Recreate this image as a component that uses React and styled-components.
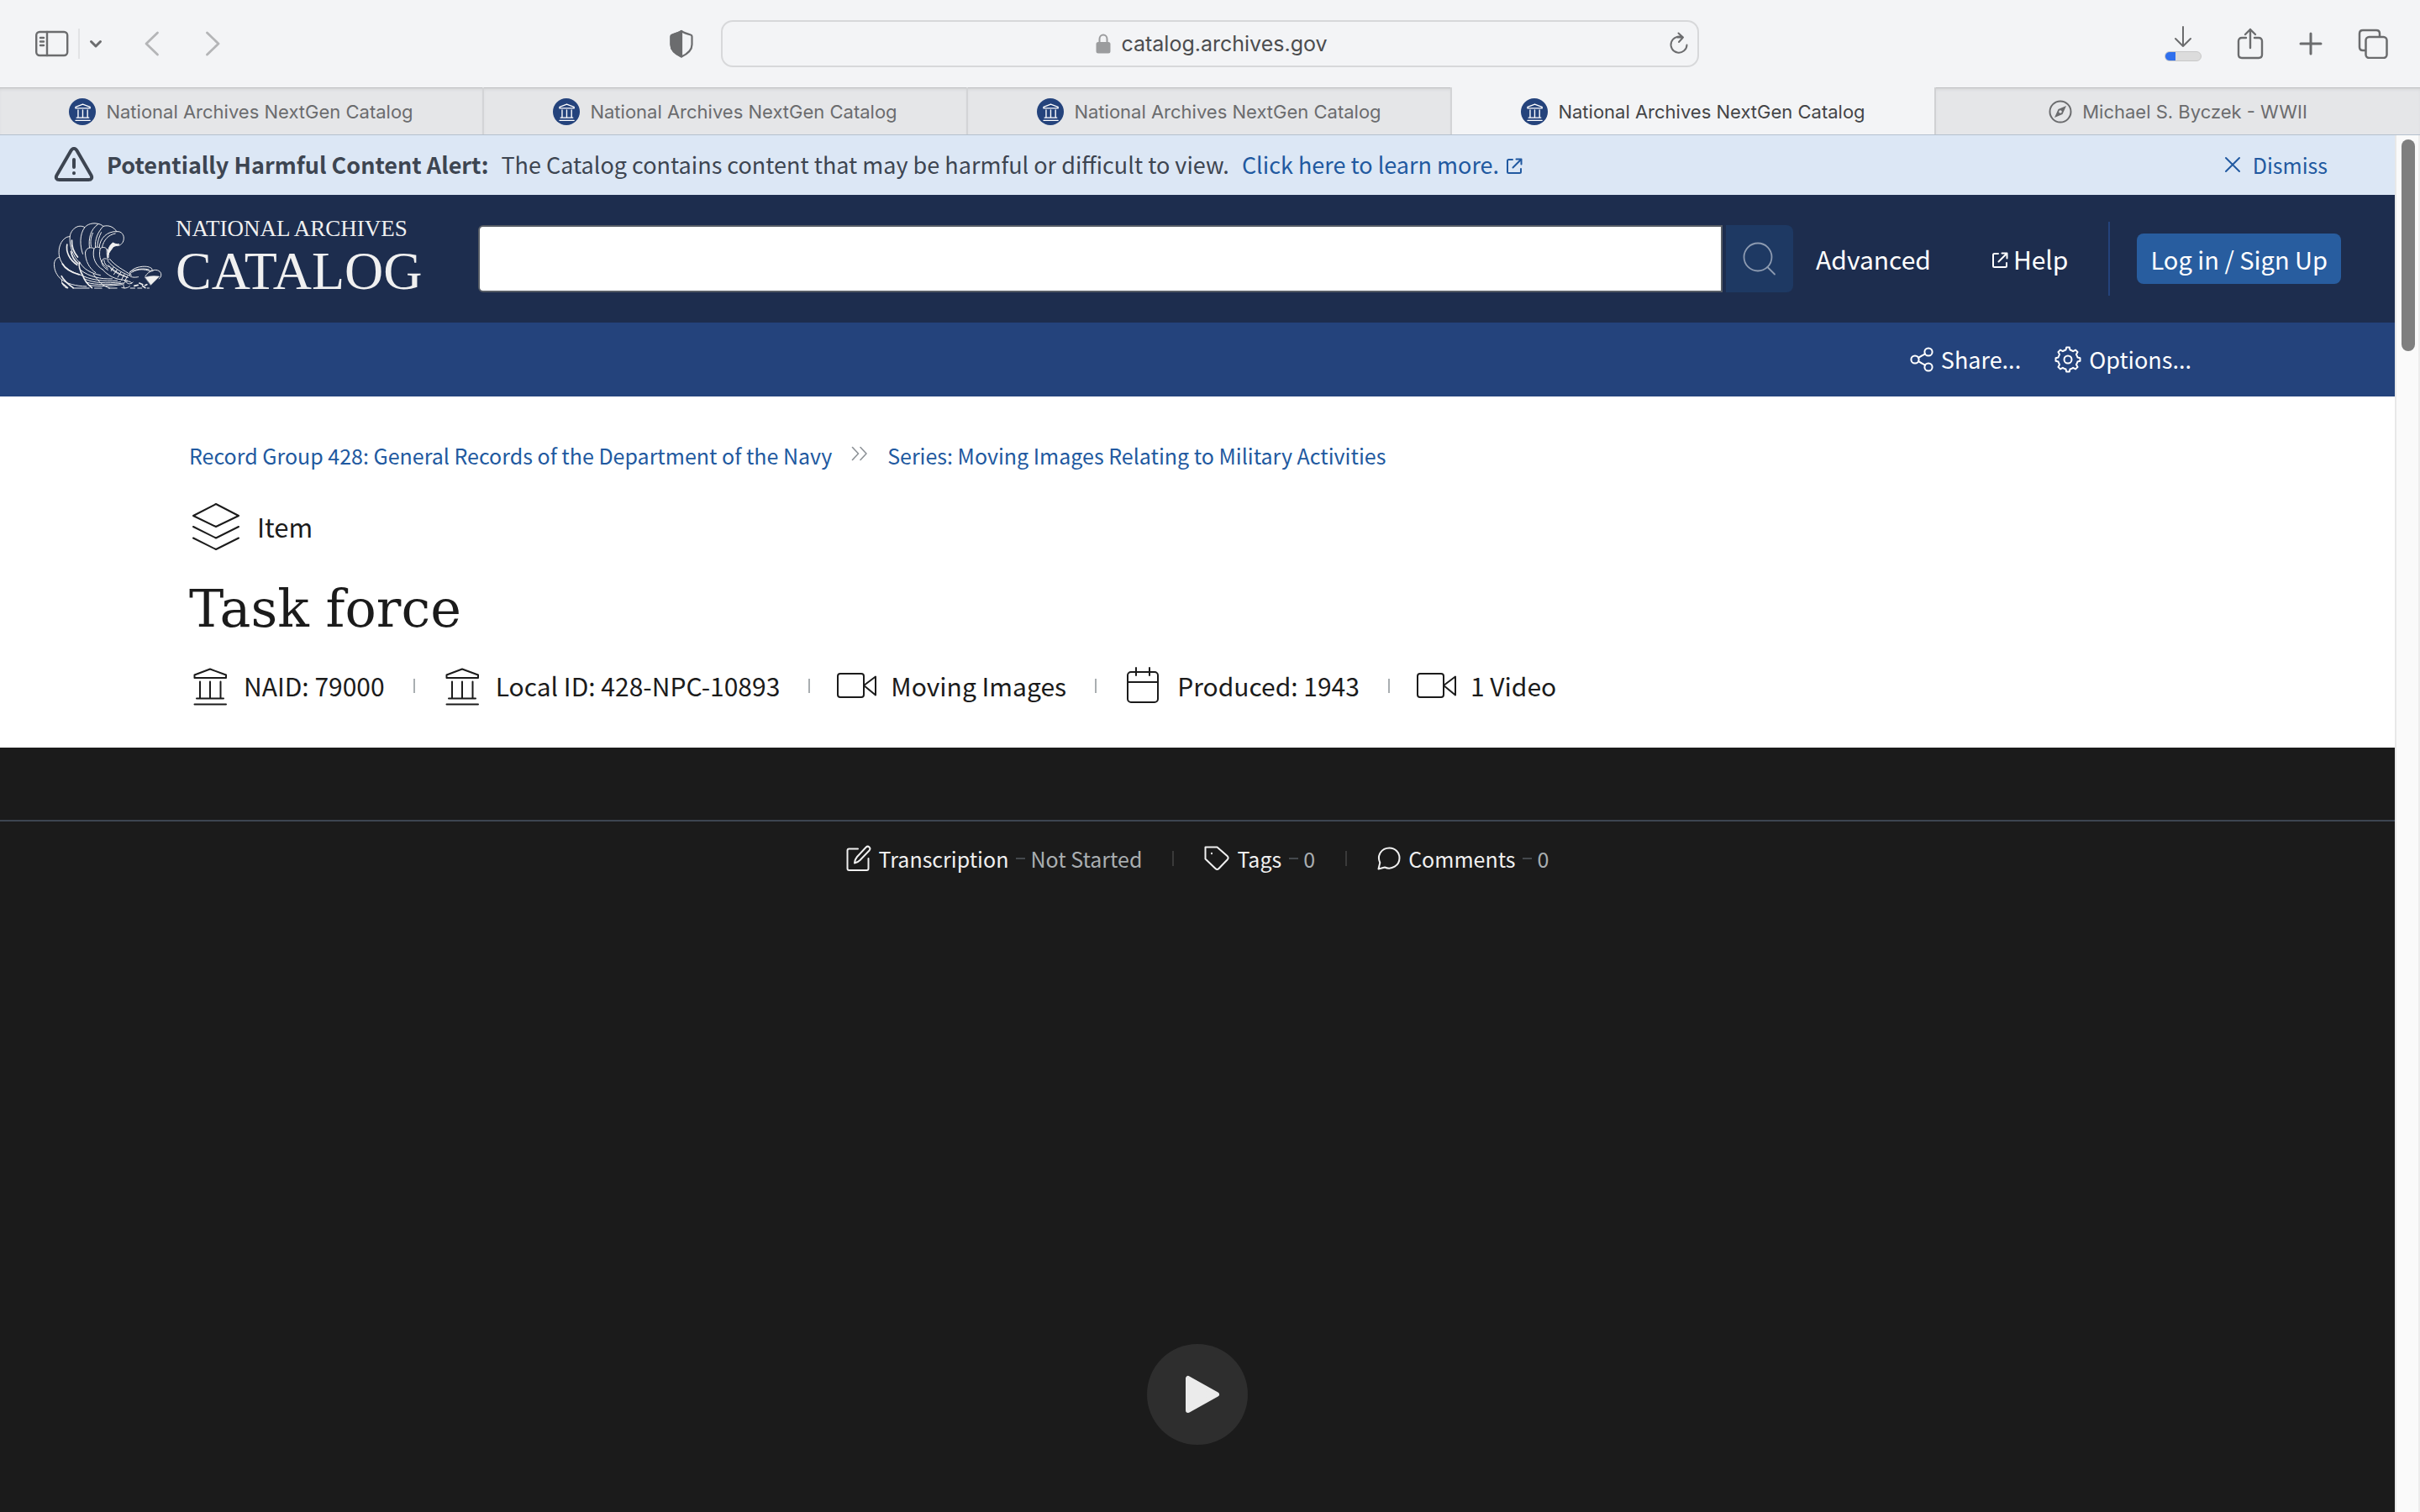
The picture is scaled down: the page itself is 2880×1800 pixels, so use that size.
import React from "react";
import styled, { createGlobalStyle } from "styled-components";

const GlobalStyle = createGlobalStyle`
  * {
    box-sizing: border-box;
  }

  body {
    margin: 0;
    font-family: "Noto Sans CJK SC", "Noto Sans", sans-serif;
    color: #1b1b1b;
  }

  button,
  input {
    font: inherit;
    color: inherit;
    border: none;
    padding: 0;
    background: none;
  }

  a {
    color: inherit;
    text-decoration: none;
  }

  svg {
    display: block;
    flex: none;
  }
`;

/* ---------- icons ---------- */

const Svg = styled.svg.attrs({ "aria-hidden": true })`
  fill: none;
  stroke: currentColor;
  stroke-width: ${({ $stroke }) => $stroke || 2};
  stroke-linecap: round;
  stroke-linejoin: round;
`;

const SidebarIcon = () => (
  <Svg width="40" height="32" viewBox="0 0 40 32" $stroke={2.4}>
    <rect x="1.2" y="2" width="37" height="28" rx="4" />
    <path d="M14 2v28M6 9h4M6 13.500h4M6 18h4" />
  </Svg>
);

const ChevronDownIcon = () => (
  <Svg width="16" height="12" viewBox="0 0 16 12" $stroke={3}>
    <path d="M2.500 3.500 8 9l5.500-5.500" />
  </Svg>
);

const BackIcon = () => (
  <Svg width="18" height="30" viewBox="0 0 18 30" $stroke={2.8}>
    <path d="M15.500 2 2 15l13.500 13" />
  </Svg>
);

const ForwardIcon = () => (
  <Svg width="18" height="30" viewBox="0 0 18 30" $stroke={2.8}>
    <path d="M2.500 2 16 15 2.500 28" />
  </Svg>
);

const ShieldIcon = () => (
  <Svg width="28" height="34" viewBox="0 0 28 34" $stroke={2.2}>
    <path d="M14 2c3 2 7.500 3.500 11 4.500.8.200 1.500 1 1.500 2V18c0 7-6 11.500-12.500 14.500C7.500 29.500 1.500 25 1.500 18V8.500c0-1 .700-1.800 1.500-2C6.500 5.500 11 4 14 2z" />
    <path
      fill="currentColor"
      d="M14 2v30.500C7.500 29.500 1.500 25 1.500 18V8.500c0-1 .700-1.800 1.500-2C6.500 5.500 11 4 14 2z"
    />
  </Svg>
);

const LockIcon = () => (
  <Svg width="18" height="24" viewBox="0 0 18 24">
    <path d="M4.500 11V6.500a4.500 5 0 0 1 9 0V11" />
    <rect x="1.500" y="11" width="15" height="11.500" rx="1.500" fill="currentColor" />
  </Svg>
);

const ReloadIcon = () => (
  <Svg width="24" height="28" viewBox="0 0 24 28">
    <path d="M16.500 6.800A9.500 9.500 0 1 0 21.500 15.500M10 6.500h7M11.500 1.500l5.500 5-5 5.500" />
  </Svg>
);

const ArrowDownIcon = () => (
  <Svg width="22" height="26" viewBox="0 0 22 26">
    <path d="M11 1v23M2 15l9 9 9-9" />
  </Svg>
);

const ShareUpIcon = () => (
  <Svg width="32" height="38" viewBox="0 0 32 38" $stroke={2.4}>
    <path d="M11 12H6c-2.500 0-4 1.500-4 4v16c0 2.500 1.500 4 4 4h20c2.500 0 4-1.500 4-4V16c0-2.500-1.500-4-4-4h-5M16 24V2M10 8l6-6 6 6" />
  </Svg>
);

const PlusIcon = () => (
  <Svg width="28" height="28" viewBox="0 0 28 28" $stroke={3}>
    <path d="M14 2v24M2 14h24" />
  </Svg>
);

const TabsIcon = () => (
  <Svg width="36" height="36" viewBox="0 0 36 36" $stroke={2.5}>
    <rect x="9.500" y="10" width="25" height="25" rx="4" />
    <path d="M9 26H6c-2.500 0-4-1.500-4-4V6c0-2.500 1.500-4 4-4h16c2.500 0 4 1.500 4 4v3" />
  </Svg>
);

const CompassIcon = () => (
  <Svg width="28" height="28" viewBox="0 0 28 28">
    <circle cx="14" cy="14" r="12.500" />
    <path
      fill="currentColor"
      fillRule="evenodd"
      strokeWidth="0"
      d="M21 7 16.500 17 7 21l4.500-10zM14 12.200a1.800 1.800 0 1 0 0 3.600 1.800 1.800 0 0 0 0-3.600z"
    />
  </Svg>
);

const WarningIcon = () => (
  <Svg width="48" height="42" viewBox="0 0 48 42" $stroke={4}>
    <path d="M20.800 3.800 3.600 33.500c-1.800 3.200-.300 5.500 3 5.500h34.800c3.300 0 4.800-2.300 3-5.500L27.200 3.800c-1.800-2.600-4.600-2.600-6.400 0zM24 15v9M24 31v.300" />
  </Svg>
);

const ExternalIcon = () => (
  <Svg width="20" height="23" viewBox="0 -3 20 23">
    <path d="M8 2H3.500C2.500 2 2 2.500 2 3.500v13c0 1 .500 1.500 1.500 1.500h13c1 0 1.500-.500 1.500-1.500V13M12.500 1.500h6v6M18 2l-9.500 9.500" />
  </Svg>
);

const CloseIcon = () => (
  <Svg width="20" height="20" viewBox="0 0 20 20">
    <path d="M2 2l16 16M18 2 2 18" />
  </Svg>
);

const SearchIcon = () => (
  <Svg width="40" height="40" viewBox="0 0 40 40" $stroke={1.8}>
    <circle cx="18" cy="18" r="16.500" />
    <path d="M29.500 30 38 38.500" />
  </Svg>
);

const ShareNodesIcon = () => (
  <Svg width="28" height="30" viewBox="0 0 28 30">
    <circle cx="22" cy="6" r="4.600" />
    <circle cx="6" cy="15" r="4.600" />
    <circle cx="22" cy="24" r="4.600" />
    <path d="m10 12.800 8-4.500M10 17.200l8 4.500" />
  </Svg>
);

const GearIcon = () => (
  <Svg width="32" height="32" viewBox="0 0 32 32">
    <circle cx="16" cy="16" r="4.500" />
    <path d="M13.500 4.500 14.200 1.500h3.600l.700 3c1.500.500 2.500 1 3.600 1.700l3-1.600 2.500 2.500-1.700 2.900c.8 1.200 1.200 2.200 1.600 3.500l3 .700v3.600l-3 .700c-.400 1.400-.9 2.500-1.600 3.500l1.700 2.900-2.500 2.500-3-1.600c-1.100.700-2.100 1.200-3.600 1.700l-.700 3h-3.600l-.700-3c-1.500-.500-2.500-1-3.600-1.700l-3 1.600-2.500-2.500L6.100 22c-.8-1.200-1.200-2.200-1.600-3.500l-3-.700v-3.600l3-.700c.400-1.300.8-2.300 1.600-3.500L4.400 7.100l2.500-2.500 3 1.600c1.100-.700 2.100-1.200 3.600-1.700z" />
  </Svg>
);

const DoubleChevronIcon = () => (
  <Svg width="20" height="22" viewBox="0 0 20 22" $stroke={1.6}>
    <path d="m1.500 1.500 7 7.500-7 7.500M11 1.500l7 7.500-7 7.500" />
  </Svg>
);

const LayersIcon = () => (
  <Svg width="64" height="58" viewBox="-2 0 64 58">
    <path d="M30 2 57 16 30 29 3 16zM3 29l27 13.500L57 29M3 42.500 30 56l27-13.500" />
  </Svg>
);

const BankIcon = ({ size = 48 }) => (
  <Svg width={size} height={size} viewBox="0 0 48 48">
    <path d="M6.500 15v-3.500L25 4.500l19 7V15zM13 19.500V39M25 19.500V39M37.500 19.500V39M9 39.500h32M6.500 46.500H44" />
  </Svg>
);

const VideoIcon = () => (
  <Svg width="48" height="32" viewBox="0 0 48 32">
    <rect x="2" y="2" width="31" height="28" rx="3" />
    <path d="M33 16 47 5.500v22z" />
  </Svg>
);

const CalendarIcon = () => (
  <Svg width="48" height="44" viewBox="0 0 48 44">
    <rect x="6" y="6" width="36" height="36" rx="4" />
    <path d="M6 18h36M16 1v9M32 1v9" />
  </Svg>
);

const EditIcon = () => (
  <Svg width="30" height="32" viewBox="0 0 30 32">
    <path d="M14 4.500H3.500c-1.300 0-2 .700-2 2v21.500c0 1.300.700 2 2 2h21c1.300 0 2-.700 2-2V16" />
    <path d="M10 21.500c.200-2.800 1-5.200 3-7.500L23.500 2.800c2.800-2.800 6.500.700 4 3.700L16.500 18c-2 2-4 3-6.500 3.500z" />
  </Svg>
);

const TagIcon = () => (
  <Svg width="30" height="30" viewBox="0 0 30 30">
    <path d="M1.500 1.500h14L27.500 12c1.500 1.500 1.500 3 .300 4.200L17.500 27c-1.200 1.300-2.700 1.300-4 0L1.500 15.500zM9 8.800v.400" />
  </Svg>
);

const CommentIcon = () => (
  <Svg width="28" height="28" viewBox="0 0 28 28">
    <path d="M1.500 26.500 3.300 19C-.7 10.500 5 1.500 14.500 1.500c7 0 12 5.500 12 12 0 9-9.500 14.500-17.500 11z" />
  </Svg>
);

const PlayIcon = () => (
  <Svg width="42" height="46" viewBox="0 0 42 46" $stroke={6}>
    <path fill="currentColor" d="M4 4v38L38 23z" />
  </Svg>
);

const EagleLogo = () => (
  <Svg width="129" height="79" viewBox="27 43 386 237" $stroke={3}>
    {/* outer feathers */}
    <path d="M72 277c-13-7-18-19-17-30-20-16-27-36-27-55 0-14 8-24 19-25-6-24 0-52 18-67 6-5 12-7 19-7 2-18 16-34 32-37 8-1 15 0 21 4 10-12 30-17 46-13 8 1 14 4 20 9 20-5 37 2 48 19 17-2 28 12 25 29-2 13-12 21-22 22" />
    <path d="M137 60c-20 25-17 68-7 95M84 93c-2 34 10 70 34 92M47 167c8 30 35 52 72 61M55 247c18 14 50 23 88 24" />
    <path d="M184 49c-28 20-34 52-30 84M203 56c-20 22-30 46-28 76M251 75c-34-2-60 24-62 56M196 78c-8 15-13 32-14 50M246 82c-25 4-42 24-47 49M166 80c-8 16-9 32-6 48" />
    <path strokeWidth="5" d="M74 121c-5 26 8 54 36 73M88 146c3 18 12 32 24 42M91 106c-1 22 6 42 21 60M57 190c9 16 30 30 60 39M118 185c-4 14 2 30 12 47M130 232c6 18 17 32 33 44M54 234c9 18 25 30 42 42M57 260l19 16" />
    {/* inner feathers */}
    <path d="M139 150c2-17 20-22 31-14 7-8 18-7 23-1 9-6 18-4 23 3 7 8 6 20 5 30M139 150c0 31 15 57 37 72M170 137c-8 32 7 60 31 74M192 136c-7 32 4 54 27 70M198 180c2-9 11-11 17-7M197 182c2 16 12 24 23 30M206 177c1 14 9 22 21 25M216 138c0 16 0 28 5 40" />
    <path d="M119 185c14 25 42 40 74 46M123 213c31 24 70 32 112 31M120 229c34 18 85 26 133 21M134 243c35 17 83 18 131 12M142 256c38 11 83 10 133 3M155 267c35 5 78 2 116-3M168 227c22 31 34 42 58 50M201 211c32 34 55 34 88 39" />
    <path d="M226 173c20 25 49 39 78 58M219 180c22 26 48 40 76 52M221 195c20 21 45 34 71 44M229 207c20 17 39 25 60 31M240 202l-9 14M252 212l-11 16M266 220l-11 18M278 228l-10 20M289 235l-9 17M221 168c0-20 9-38 24-47" />
    <path fill="currentColor" d="M219 158c0-17 5-34 19-43 7 4 13 6 22 5-7 8-17 4-22 11-6 9-13 17-19 27z" />
    {/* head and beak */}
    <path d="M297 224c5-13 24-22 45-24 14-1 28 0 36 9l-7 8c-21-9-43-9-63 2-6 4-10 6-11 13 6 8 21 7 31 5M299 218c23-9 47-13 68-7M378 214c14-5 27 0 31 10 2 8 0 15-7 20M353 235c7-11 15-18 28-20M279 277c-7-9-5-21 7-24 7-2 15 1 19 6M283 253c6 10 17 12 26 3M298 270c-7 7-20 9-29 5" />
    <path fill="currentColor" strokeWidth="1" d="M352 238c17-5 34-6 52-3l-31 31z" />
    <path strokeWidth="5" d="M314 269l13-3M332 259l12 5M343 269l10 7M352 267l7-3" />
    <path d="M300 277h16M326 277h15M360 277h7M95 277h58M172 277h26M222 277h30" />
  </Svg>
);

/* ---------- browser chrome ---------- */

const Browser = styled.div`
  display: flex;
  flex-direction: column;
  height: 100vh;
  overflow: hidden;
`;

const Toolbar = styled.div`
  display: grid;
  grid-template-columns: 1fr minmax(400px, 1164px) 1fr;
  align-items: center;
  flex: none;
  height: 104px;
  padding: 0 38px;
  background-color: #f3f4f6;
  color: #6b6c6e;
`;

const ToolGroup = styled.div`
  display: flex;
  align-items: center;
  justify-content: ${({ $end }) => ($end ? "flex-end" : "flex-start")};
  gap: ${({ $gap }) => $gap}px;
  padding-left: 4px;
`;

const ToolButton = styled.button`
  display: flex;
  flex-direction: column;
  align-items: center;
  gap: 4px;
  color: ${({ $faded }) => ($faded ? "#b4b5b7" : "#6b6c6e")};
`;

const ToolDivider = styled.span`
  width: 2px;
  height: 36px;
  background-color: #e2e3e5;
`;

const NavButtons = styled.div`
  display: flex;
  gap: 54px;
  margin-left: 39px;
`;

const ShieldButton = styled(ToolButton)`
  margin-left: auto;
  margin-right: 33px;
`;

const Progress = styled.span`
  width: 44px;
  height: 12px;
  border: 1px solid #c8c8c8;
  border-radius: 6px;
  background: linear-gradient(to right, #2f6fed 12px, #dcdcdc 12px);
`;

const AddressBar = styled.form`
  display: flex;
  align-items: center;
  height: 56px;
  padding: 0 10px;
  border: 2px solid #d7d8da;
  border-radius: 14px;
`;

const Address = styled.label`
  display: flex;
  align-items: center;
  justify-content: center;
  gap: 12px;
  flex: 1;
  padding-left: 28px;
  color: #9b9c9e;
`;

const AddressInput = styled.input`
  field-sizing: content;
  font-family: Inter, sans-serif;
  font-size: 25px;
  line-height: 32px;
  color: #4c4d4f;
  outline: none;
`;

const TabBar = styled.div`
  display: grid;
  grid-template-columns: repeat(5, 1fr);
  flex: none;
  height: 57px;
  border-bottom: 1px solid #b4c0ce;
`;

const Tab = styled.button`
  display: flex;
  align-items: center;
  justify-content: center;
  gap: 12px;
  padding-top: 2px;
  font-family: Inter, sans-serif;
  font-size: 22px;
  border-right: 2px solid ${({ $active }) => ($active ? "#d0d1d3" : "#d3d4d6")};
  background-color: ${({ $active }) => ($active ? "#f3f4f6" : "#e5e6e8")};
  color: ${({ $active }) => ($active ? "#444547" : "#6b6c6e")};
  box-shadow: ${({ $active }) =>
    $active ? "none" : "inset 0 1px 0 #bfc0c2, inset 0 4px 4px -2px #cfd0d2"};

  &:last-child {
    border-right: none;
  }
`;

const Favicon = styled.span`
  display: flex;
  align-items: center;
  justify-content: center;
  width: 32px;
  height: 32px;
  border-radius: 50%;
  background-color: #24437c;
  color: #ffffff;

  svg {
    stroke-width: 3;
  }
`;

const Viewport = styled.div`
  display: flex;
  flex: 1;
  min-height: 0;
`;

const Page = styled.div`
  flex: 1;
  min-width: 0;
  overflow: hidden;
`;

const ScrollTrack = styled.div`
  width: 30px;
  padding: 5px 4px 0 6px;
  border-left: 2px solid #e8e8e8;
  border-right: 2px solid #ededed;
  background-color: #fafafa;
`;

const ScrollThumb = styled.div`
  width: 16px;
  height: 252px;
  border-radius: 8px;
  background-color: #7f7f7f;
`;

/* ---------- page ---------- */

const Alert = styled.div`
  display: flex;
  align-items: center;
  gap: 15px;
  padding: 14px 64px 15px;
  background-color: #dce7f5;
  color: #3d4551;
  font-size: 27px;
  line-height: 42px;
`;

const AlertLink = styled.a`
  display: flex;
  align-items: center;
  gap: 8px;
  color: #2159a0;
`;

const DismissButton = styled.button`
  display: flex;
  align-items: center;
  gap: 14px;
  margin-left: auto;
  padding: 0 16px;
  font-size: 25px;
  color: #2159a0;
`;

const Header = styled.header`
  display: flex;
  align-items: center;
  padding: 25px 64px;
  background-color: #1d2d4e;
  color: #ffffff;
  font-size: 30px;
  line-height: 44px;
`;

const Logo = styled.a`
  display: flex;
  align-items: center;
  gap: 16px;
  color: #f0f0f0;
  font-family: "Liberation Serif", serif;

  svg {
    margin-bottom: 8px;
  }
`;

const LogoText = styled.span`
  display: flex;
  flex-direction: column;
`;

const LogoSmall = styled.span`
  font-size: 27px;
  line-height: 30px;
`;

const LogoLarge = styled.span`
  font-size: 64px;
  line-height: 72px;
`;

const SearchForm = styled.form`
  display: flex;
  flex: 1;
  gap: 4px;
  margin-left: 66px;
`;

const SearchInput = styled.input`
  flex: 1;
  min-width: 0;
  height: 80px;
  padding: 0 16px;
  border: 2px solid #565c65;
  border-radius: 6px 0 0 6px;
  background-color: #ffffff;
  color: #1b1b1b;
`;

const SearchButton = styled.button`
  display: flex;
  align-items: center;
  justify-content: center;
  width: 80px;
  border-radius: 0 8px 8px 0;
  background-color: #1e3963;
  color: #8d9bb1;
`;

const HeaderLink = styled.a`
  display: flex;
  align-items: center;
  gap: 6px;
  margin-left: ${({ $gap }) => $gap}px;
`;

const HeaderDivider = styled.span`
  width: 2px;
  height: 88px;
  margin: 0 32px 0 48px;
  background-color: #24437c;
`;

const LoginButton = styled.button`
  padding: 8px 16px;
  border-radius: 8px;
  background-color: #285d9f;
  font-size: 29px;
`;

const ActionBar = styled.div`
  display: flex;
  justify-content: flex-end;
  gap: 40px;
  padding: 22px 242px;
  background-color: #24437c;
  color: #ffffff;
`;

const ActionButton = styled.button`
  display: flex;
  align-items: center;
  gap: 9px;
  font-size: 27px;
  line-height: 44px;
`;

const Record = styled.main`
  padding: 48px 225px 50px;
  background-color: #ffffff;
`;

const Breadcrumbs = styled.nav`
  display: flex;
  align-items: center;
  gap: 23px;
  font-size: 25px;
  line-height: 44px;
  color: #2159a0;

  svg {
    color: #8d9297;
  }
`;

const Level = styled.div`
  display: flex;
  align-items: center;
  gap: 17px;
  margin-top: 34px;
  font-size: 31px;
  line-height: 58px;
`;

const Title = styled.h1`
  margin: 24px 0 22px;
  font-family: "DejaVu Serif", serif;
  font-size: 62px;
  font-weight: 400;
  line-height: 90px;
`;

const MetaList = styled.ul`
  display: flex;
  align-items: center;
  margin: 0;
  padding: 0;
  list-style: none;
  font-size: 30px;
  line-height: 48px;
`;

const MetaItem = styled.li`
  display: flex;
  align-items: center;
  gap: 17px;

  & + &::before {
    content: "";
    width: 2px;
    height: 17px;
    margin: 0 14px 0 34px;
    background-color: #a9aeb1;
  }
`;

const Viewer = styled.section`
  padding-top: 86px;
  background-color: #1b1b1b;
  color: #f0f0f0;
`;

const Contributions = styled.div`
  display: flex;
  justify-content: center;
  padding: 20px 0;
  border-top: 2px solid #3d4551;
  font-size: 25px;
  line-height: 48px;
`;

const Contribution = styled.button`
  display: flex;
  align-items: center;
  gap: 9px;

  & + &::before {
    content: "";
    width: 2px;
    height: 18px;
    margin: 0 27px 0 36px;
    background-color: #3a3a3a;
  }
`;

const Status = styled.span`
  display: flex;
  align-items: center;
  gap: 6px;
  color: #a9aeb1;

  &::before {
    content: "";
    width: 11px;
    height: 2px;
    background-color: #45494d;
  }
`;

const Player = styled.div`
  display: flex;
  align-items: center;
  justify-content: center;
  min-height: 1188px;
`;

const PlayButton = styled.button`
  display: flex;
  align-items: center;
  justify-content: center;
  width: 120px;
  height: 120px;
  padding-left: 12px;
  border-radius: 50%;
  background-color: #2e2e2e;
  color: #ebebeb;
`;

const tabs = [
  { title: "National Archives NextGen Catalog" },
  { title: "National Archives NextGen Catalog" },
  { title: "National Archives NextGen Catalog" },
  { title: "National Archives NextGen Catalog", active: true },
  { title: "Michael S. Byczek - WWII", compass: true },
];

const meta = [
  { icon: <BankIcon />, text: "NAID: 79000" },
  { icon: <BankIcon />, text: "Local ID: 428-NPC-10893" },
  { icon: <VideoIcon />, text: "Moving Images" },
  { icon: <CalendarIcon />, text: "Produced: 1943" },
  { icon: <VideoIcon />, text: "1 Video" },
];

const contributions = [
  { icon: <EditIcon />, text: "Transcription", status: "Not Started" },
  { icon: <TagIcon />, text: "Tags", status: "0" },
  { icon: <CommentIcon />, text: "Comments", status: "0" },
];

function BrowserToolbar() {
  return (
    <Toolbar>
      <ToolGroup $gap={11}>
        <ToolButton aria-label="Sidebar">
          <SidebarIcon />
        </ToolButton>
        <ToolDivider />
        <ToolButton aria-label="Tab groups">
          <ChevronDownIcon />
        </ToolButton>
        <NavButtons>
          <ToolButton $faded aria-label="Back">
            <BackIcon />
          </ToolButton>
          <ToolButton $faded aria-label="Forward">
            <ForwardIcon />
          </ToolButton>
        </NavButtons>
        <ShieldButton aria-label="Privacy report">
          <ShieldIcon />
        </ShieldButton>
      </ToolGroup>
      <AddressBar>
        <Address>
          <LockIcon />
          <AddressInput aria-label="Address" defaultValue="catalog.archives.gov" />
        </Address>
        <ToolButton type="button" aria-label="Reload">
          <ReloadIcon />
        </ToolButton>
      </AddressBar>
      <ToolGroup $end $gap={42}>
        <ToolButton aria-label="Downloads">
          <ArrowDownIcon />
          <Progress />
        </ToolButton>
        <ToolButton aria-label="Share">
          <ShareUpIcon />
        </ToolButton>
        <ToolButton aria-label="New tab">
          <PlusIcon />
        </ToolButton>
        <ToolButton aria-label="Tab overview">
          <TabsIcon />
        </ToolButton>
      </ToolGroup>
    </Toolbar>
  );
}

function App() {
  return (
    <Browser>
      <GlobalStyle />
      <BrowserToolbar />
      <TabBar>
        {tabs.map((tab, index) => (
          <Tab key={index} $active={tab.active}>
            {tab.compass ? (
              <CompassIcon />
            ) : (
              <Favicon>
                <BankIcon size={22} />
              </Favicon>
            )}
            {tab.title}
          </Tab>
        ))}
      </TabBar>
      <Viewport>
        <Page>
          <Alert>
            <WarningIcon />
            <strong>Potentially Harmful Content Alert:</strong>
            <span>The Catalog contains content that may be harmful or difficult to view.</span>
            <AlertLink href="#learn">
              Click here to learn more.
              <ExternalIcon />
            </AlertLink>
            <DismissButton>
              <CloseIcon />
              Dismiss
            </DismissButton>
          </Alert>
          <Header>
            <Logo href="#home">
              <EagleLogo />
              <LogoText>
                <LogoSmall>NATIONAL ARCHIVES</LogoSmall>
                <LogoLarge>CATALOG</LogoLarge>
              </LogoText>
            </Logo>
            <SearchForm>
              <SearchInput aria-label="Search the catalog" />
              <SearchButton type="button" aria-label="Search">
                <SearchIcon />
              </SearchButton>
            </SearchForm>
            <HeaderLink href="#advanced" $gap={27}>
              Advanced
            </HeaderLink>
            <HeaderLink href="#help" $gap={72}>
              <ExternalIcon />
              Help
            </HeaderLink>
            <HeaderDivider />
            <LoginButton>Log in / Sign Up</LoginButton>
          </Header>
          <ActionBar>
            <ActionButton>
              <ShareNodesIcon />
              Share...
            </ActionButton>
            <ActionButton>
              <GearIcon />
              Options...
            </ActionButton>
          </ActionBar>
          <Record>
            <Breadcrumbs>
              <a href="#group">Record Group 428: General Records of the Department of the Navy</a>
              <DoubleChevronIcon />
              <a href="#series">Series: Moving Images Relating to Military Activities</a>
            </Breadcrumbs>
            <Level>
              <LayersIcon />
              Item
            </Level>
            <Title>Task force</Title>
            <MetaList>
              {meta.map((item) => (
                <MetaItem key={item.text}>
                  {item.icon}
                  {item.text}
                </MetaItem>
              ))}
            </MetaList>
          </Record>
          <Viewer>
            <Contributions>
              {contributions.map((item) => (
                <Contribution key={item.text}>
                  {item.icon}
                  {item.text}
                  <Status>{item.status}</Status>
                </Contribution>
              ))}
            </Contributions>
            <Player>
              <PlayButton aria-label="Play">
                <PlayIcon />
              </PlayButton>
            </Player>
          </Viewer>
        </Page>
        <ScrollTrack>
          <ScrollThumb />
        </ScrollTrack>
      </Viewport>
    </Browser>
  );
}

export default App;
